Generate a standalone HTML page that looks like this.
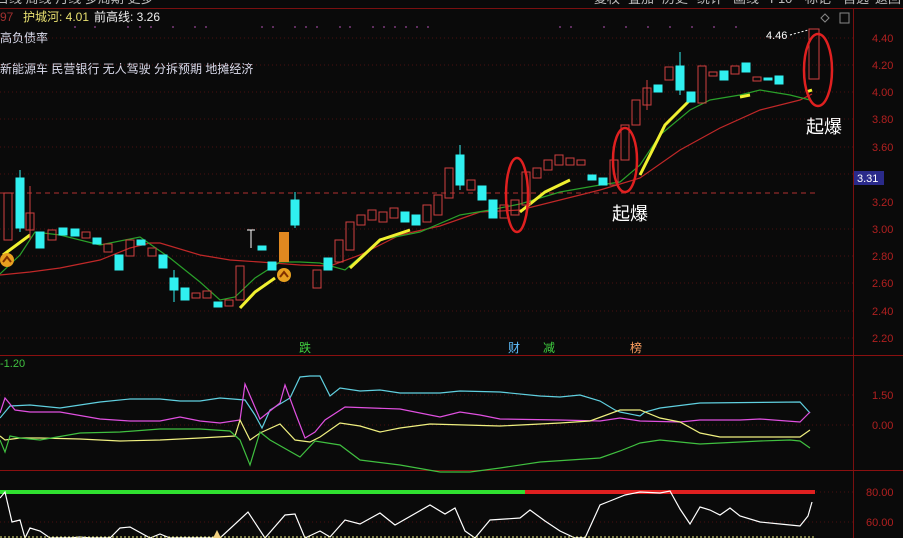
<!DOCTYPE html>
<html><head><meta charset="utf-8"><style>
body{margin:0;background:#0a0a0a;width:903px;height:538px;overflow:hidden;font-family:"Liberation Sans","Noto Sans CJK SC",sans-serif}
svg{display:block}
</style></head><body>
<svg width="903" height="538" viewBox="0 0 903 538" xmlns="http://www.w3.org/2000/svg" font-family="Liberation Sans, Noto Sans CJK SC, sans-serif">
<rect width="903" height="538" fill="#0a0a0a"/>
<!-- top bar -->
<g fill="#bbb" font-size="13"><text x="-4" y="3">日线 周线 月线 多周期 更多</text>
<text x="594" y="3">复权</text><text x="628" y="3">叠加</text><text x="662" y="3">历史</text><text x="697" y="3">统计</text><text x="733" y="3">画线</text><text x="770" y="3">F10</text><text x="805" y="3">标记</text><text x="843" y="3">自选</text><text x="875" y="3">返回</text></g>
<line x1="0" y1="8.5" x2="903" y2="8.5" stroke="#7a1010"/>
<line x1="853.5" y1="8" x2="853.5" y2="538" stroke="#7a1010"/>
<line x1="0" y1="355.5" x2="903" y2="355.5" stroke="#8a1010"/>
<line x1="0" y1="470.5" x2="903" y2="470.5" stroke="#8a1010"/>
<!-- header text -->
<text x="0" y="21" font-size="12" fill="#a03030">97</text>
<text x="23" y="21" font-size="12" fill="#e8e070">护城河: 4.01</text>
<text x="94" y="21" font-size="12" fill="#eee">前高线: 3.26</text>
<text x="0" y="42" font-size="12" fill="#dde">高负债率</text>
<text x="0" y="73" font-size="12" fill="#dde">新能源车 民营银行 无人驾驶 分拆预期 地摊经济</text>
<g fill="#7a3a7a"><circle cx="75" cy="27" r="1"/><circle cx="95" cy="27" r="1"/><circle cx="128" cy="27" r="1"/><circle cx="140" cy="27" r="1"/><circle cx="151" cy="27" r="1"/><circle cx="173" cy="27" r="1"/><circle cx="195" cy="27" r="1"/><circle cx="206" cy="27" r="1"/><circle cx="262" cy="27" r="1"/><circle cx="273" cy="27" r="1"/><circle cx="295" cy="27" r="1"/><circle cx="306" cy="27" r="1"/><circle cx="317" cy="27" r="1"/><circle cx="340" cy="27" r="1"/><circle cx="350" cy="27" r="1"/><circle cx="373" cy="27" r="1"/><circle cx="384" cy="27" r="1"/><circle cx="395" cy="27" r="1"/><circle cx="406" cy="27" r="1"/><circle cx="417" cy="27" r="1"/><circle cx="428" cy="27" r="1"/><circle cx="560" cy="27" r="1"/><circle cx="571" cy="27" r="1"/><circle cx="604" cy="27" r="1"/><circle cx="626" cy="27" r="1"/><circle cx="648" cy="27" r="1"/><circle cx="670" cy="27" r="1"/><circle cx="692" cy="27" r="1"/><circle cx="714" cy="27" r="1"/><circle cx="736" cy="27" r="1"/></g>
<!-- grid -->
<g stroke="#4a1010" stroke-dasharray="1 3"><line x1="0" y1="38" x2="853" y2="38"/><line x1="0" y1="65" x2="853" y2="65"/><line x1="0" y1="92" x2="853" y2="92"/><line x1="0" y1="119" x2="853" y2="119"/><line x1="0" y1="147" x2="853" y2="147"/><line x1="0" y1="174" x2="853" y2="174"/><line x1="0" y1="229" x2="853" y2="229"/><line x1="0" y1="256" x2="853" y2="256"/><line x1="0" y1="283" x2="853" y2="283"/><line x1="0" y1="311" x2="853" y2="311"/><line x1="0" y1="338" x2="853" y2="338"/><line x1="0" y1="395" x2="853" y2="395"/><line x1="0" y1="425" x2="853" y2="425"/><line x1="0" y1="492" x2="853" y2="492"/><line x1="0" y1="522" x2="853" y2="522"/></g>
<line x1="0" y1="193" x2="815" y2="193" stroke="#b03030" stroke-dasharray="5 4"/>
<!-- axis labels -->
<g fill="#b02020" font-size="11"><text x="872" y="42">4.40</text><text x="872" y="69">4.20</text><text x="872" y="96">4.00</text><text x="872" y="123">3.80</text><text x="872" y="151">3.60</text><text x="872" y="206">3.20</text><text x="872" y="233">3.00</text><text x="872" y="260">2.80</text><text x="872" y="287">2.60</text><text x="872" y="315">2.40</text><text x="872" y="342">2.20</text><text x="872" y="399">1.50</text><text x="872" y="429">0.00</text><text x="866" y="496">80.00</text><text x="866" y="526">60.00</text></g>
<rect x="854" y="171" width="30" height="14" fill="#2a2a8a"/><text x="857" y="182" font-size="11" fill="#fff">3.31</text>
<text x="0" y="367" font-size="11" fill="#40c040">-1.20</text>
<!-- MA lines -->
<polyline fill="none" stroke="#c02828" stroke-width="1.2" points="0,275 30,272 60,268 100,260 130,248 150,243 160,243 200,255 230,260 260,262 300,265 330,266 360,255 400,235 440,226 480,212 520,210 560,200 600,190 640,178 680,150 720,128 760,110 800,100 812,94"/>
<polyline fill="none" stroke="#2aa02a" stroke-width="1.2" points="0,274 20,255 35,232 60,235 100,245 140,237 170,258 200,282 220,300 235,297 255,278 280,262 300,262 320,263 345,270 380,240 420,232 460,215 490,210 520,204 560,192 600,185 620,182 640,165 660,135 690,110 710,100 740,95 760,90 790,95 810,100"/>
<g fill="none" stroke="#f0f030" stroke-width="3"><polyline points="3,255 30,235"/><polyline points="240,308 255,292 275,278"/><polyline points="350,268 380,240 410,230"/><polyline points="520,212 545,192 570,180"/><polyline points="640,175 665,125 690,100"/><polyline points="740,97 750,95"/><polyline points="806,92 812,90"/></g>
<!-- candles -->
<g stroke-width="1">
<g fill="none" stroke="#d04040">
<rect x="4" y="193" width="8" height="47"/><rect x="26" y="213" width="8" height="17"/><line x1="30" y1="186" x2="30" y2="240"/><rect x="48" y="230" width="8" height="10"/><rect x="82" y="232" width="8" height="6"/><rect x="104" y="244" width="8" height="8"/><rect x="126" y="240" width="8" height="16"/><rect x="148" y="248" width="8" height="8"/><rect x="192" y="293" width="8" height="5"/><rect x="203" y="291" width="8" height="7"/><rect x="225" y="300" width="8" height="6"/><rect x="236" y="266" width="8" height="34"/><rect x="313" y="270" width="8" height="18"/><rect x="335" y="240" width="8" height="22"/><rect x="346" y="222" width="8" height="28"/><rect x="357" y="215" width="8" height="10"/><rect x="368" y="210" width="8" height="10"/><rect x="379" y="212" width="8" height="10"/><rect x="390" y="208" width="8" height="10"/><rect x="423" y="205" width="8" height="17"/><rect x="434" y="195" width="8" height="20"/><rect x="445" y="168" width="8" height="30"/><rect x="467" y="180" width="8" height="10"/><rect x="500" y="205" width="8" height="13"/><rect x="511" y="200" width="8" height="15"/><rect x="522" y="172" width="8" height="33"/><rect x="533" y="168" width="8" height="10"/><rect x="544" y="160" width="8" height="10"/><rect x="555" y="155" width="8" height="10"/><rect x="566" y="158" width="8" height="7"/><rect x="577" y="160" width="8" height="5"/><rect x="610" y="160" width="8" height="25"/><rect x="621" y="125" width="8" height="35"/><rect x="632" y="100" width="8" height="25"/><rect x="643" y="88" width="8" height="17"/><line x1="647" y1="80" x2="647" y2="110"/><rect x="665" y="67" width="8" height="13"/><rect x="698" y="66" width="8" height="37"/><rect x="709" y="72" width="8" height="4"/><rect x="731" y="66" width="8" height="8"/><rect x="753" y="77" width="8" height="4"/><rect x="809" y="29" width="10" height="50"/>
</g>
<g fill="#30f0f0" stroke="#30f0f0">
<rect x="16" y="178" width="8" height="50"/><line x1="20" y1="170" x2="20" y2="232"/><rect x="36" y="232" width="8" height="16"/><rect x="59" y="228" width="8" height="7"/><rect x="71" y="229" width="8" height="7"/><rect x="93" y="238" width="8" height="6"/><rect x="115" y="255" width="8" height="15"/><rect x="137" y="240" width="8" height="5"/><rect x="159" y="255" width="8" height="13"/><rect x="170" y="278" width="8" height="12"/><line x1="174" y1="270" x2="174" y2="302"/><rect x="181" y="288" width="8" height="12"/><rect x="214" y="302" width="8" height="5"/><rect x="258" y="246" width="8" height="4"/><rect x="268" y="262" width="8" height="8"/><rect x="291" y="200" width="8" height="25"/><line x1="295" y1="192" x2="295" y2="228"/><rect x="324" y="258" width="8" height="12"/><rect x="401" y="212" width="8" height="10"/><rect x="412" y="215" width="8" height="10"/><rect x="456" y="155" width="8" height="30"/><line x1="460" y1="145" x2="460" y2="190"/><rect x="478" y="186" width="8" height="14"/><rect x="489" y="200" width="8" height="18"/><rect x="588" y="175" width="8" height="5"/><rect x="599" y="178" width="8" height="7"/><rect x="654" y="85" width="8" height="7"/><rect x="676" y="66" width="8" height="24"/><line x1="680" y1="52" x2="680" y2="95"/><rect x="687" y="92" width="8" height="10"/><rect x="720" y="71" width="8" height="9"/><rect x="742" y="63" width="8" height="9"/><rect x="764" y="78" width="8" height="2"/><rect x="775" y="76" width="8" height="8"/>
</g>
<line x1="251" y1="230" x2="251" y2="248" stroke="#fff"/><line x1="247" y1="230" x2="255" y2="230" stroke="#fff"/>
<rect x="279" y="232" width="10" height="30" fill="#e08820"/>
</g>
<circle cx="7" cy="260" r="7" fill="#e8a020"/><path d="M3,262 L7,257 L11,262" stroke="#803000" stroke-width="2" fill="none"/>
<circle cx="284" cy="275" r="7" fill="#e8a020"/><path d="M280,277 L284,272 L288,277" stroke="#803000" stroke-width="2" fill="none"/>
<!-- circles and labels -->
<g fill="none" stroke="#e02020" stroke-width="2.5"><ellipse cx="517" cy="195" rx="11" ry="37"/><ellipse cx="625" cy="160" rx="12" ry="32"/><ellipse cx="818" cy="70" rx="14" ry="36"/></g>
<text x="612" y="220" font-size="18" fill="#fff">起爆</text>
<text x="806" y="133" font-size="18" fill="#fff">起爆</text>
<text x="766" y="39" font-size="11" fill="#fff">4.46</text>
<line x1="790" y1="35" x2="808" y2="30" stroke="#fff" stroke-dasharray="2 2"/>
<path d="M821,18 l4,-4 l4,4 l-4,4z" fill="none" stroke="#888"/><rect x="840" y="13" width="9" height="10" fill="none" stroke="#888"/>
<g font-size="12"><text x="299" y="352" fill="#40d040">跌</text><text x="508" y="352" fill="#60c0ff">财</text><text x="543" y="352" fill="#40d040">减</text><text x="630" y="352" fill="#ffa060">榜</text></g>
<!-- oscillator -->
<g fill="none" stroke-width="1.2">
<polyline stroke="#60d0e0" points="0,418 10,406 30,405 60,408 100,402 130,399 160,399 180,401 200,401 220,398 245,400 255,415 262,428 270,410 290,398 300,377 310,376 320,376 330,396 340,388 360,391 380,390 400,393 440,393 460,391 500,392 540,396 560,397 580,395 600,401 615,410 620,412 640,416 645,412 660,408 700,403 800,402 810,413"/>
<polyline stroke="#e050e0" points="0,413 5,398 15,410 30,412 60,412 100,419 130,421 160,421 180,417 200,421 220,423 240,420 245,384 260,419 280,403 285,385 295,412 305,438 315,432 325,420 345,407 400,409 440,417 460,412 480,415 500,419 560,420 600,421 620,418 640,421 680,422 700,420 740,420 760,419 800,422 810,412"/>
<polyline stroke="#f0f080" points="0,436 5,440 20,438 40,438 80,439 120,441 160,440 200,438 235,436 240,420 250,440 260,433 280,424 295,440 310,442 320,437 340,423 360,426 380,432 400,428 430,424 500,426 560,423 590,421 620,410 640,410 660,418 680,422 700,433 720,437 800,437 810,430"/>
<polyline stroke="#40c040" points="0,440 5,452 10,436 20,438 40,440 80,433 120,432 160,429 200,429 230,431 240,440 250,465 260,432 270,440 300,457 315,441 340,445 360,460 400,465 440,472 470,472 500,468 540,462 600,458 620,451 640,443 660,440 700,444 760,441 790,440 800,441 810,448"/>
</g>
<!-- bottom -->
<rect x="0" y="490" width="525" height="4" fill="#30e030"/><rect x="525" y="490" width="290" height="4" fill="#e02020"/>
<polyline fill="none" stroke="#fff" stroke-width="1.2" points="0,498 5,492 12,522 20,520 25,538 30,528 40,531 50,538 70,538 80,537 90,538 100,538 110,538 120,528 130,527 150,538 160,534 170,538 205,538 220,538 248,512 265,538 285,515 295,514 305,538 320,531 330,537 345,520 360,524 380,513 395,525 430,505 445,514 455,508 465,531 475,538 490,520 520,518 530,510 545,521 560,531 575,538 585,538 600,505 610,501 625,495 640,492 660,493 670,491 680,509 690,524 700,507 710,510 720,515 730,508 740,516 760,522 780,524 800,526 808,516 812,502"/>
<line x1="0" y1="537" x2="815" y2="537" stroke="#f0f080" stroke-dasharray="2 2"/>
<path d="M213,538 L217,530 L221,538" fill="#f0d080"/>
</svg>
</body></html>
